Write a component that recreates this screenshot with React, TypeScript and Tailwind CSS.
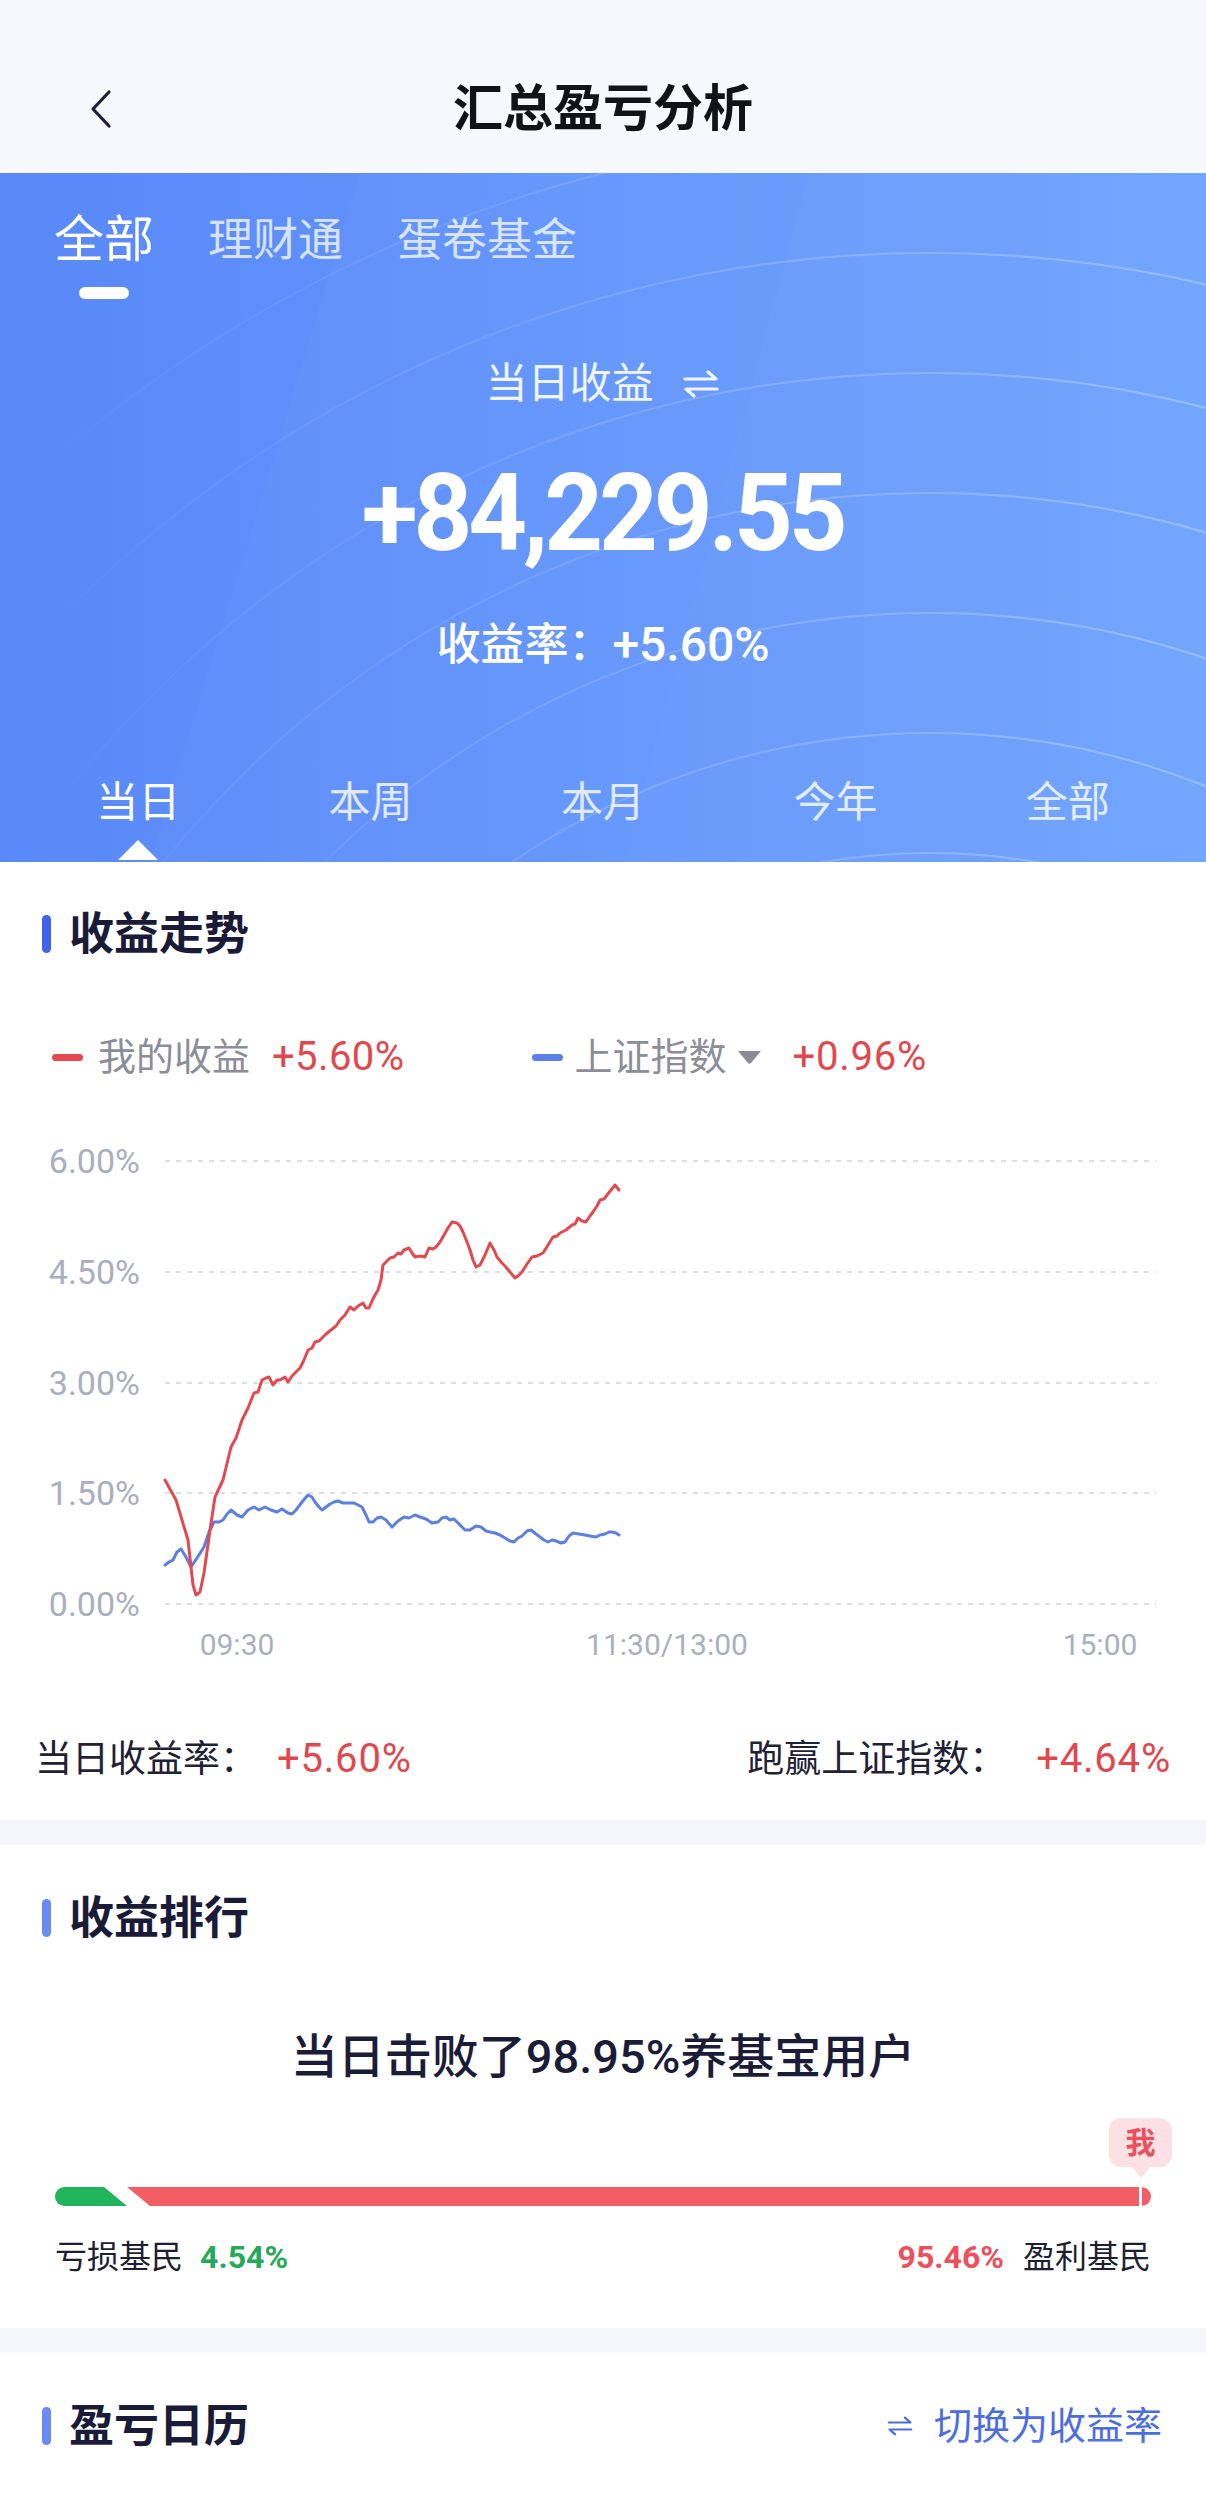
import React from "react";

const redPts: number[][] = [
  [165, 368], [176, 388], [188, 428], [193, 473], [196, 483], [200, 480], [204, 461], [210, 418], [215, 385], [223, 368],
  [231, 335], [236, 326], [242, 308], [248, 296], [254, 281], [258, 280], [262, 268], [266, 266], [269, 265], [273, 273], [277, 268],
  [280, 268], [285, 265], [288, 270], [292, 264], [296, 260], [300, 256], [304, 248], [308, 238], [312, 236], [315, 230], [319, 229], [322, 226],
  [326, 222], [331, 218], [336, 214], [340, 208], [345, 203], [350, 195], [354, 198], [358, 194], [363, 191], [366, 196], [369, 196],
  [372, 189], [375, 183], [378, 178], [381, 168], [383, 153], [386, 150], [390, 146], [394, 145], [398, 141], [401, 142], [404, 138], [409, 136],
  [412, 141], [415, 145], [420, 144], [425, 145], [429, 136], [433, 137], [436, 135], [440, 130], [444, 123], [448, 116], [452, 110], [457, 111],
  [460, 114], [463, 120], [467, 130], [470, 138], [473, 148], [476, 155], [480, 153], [485, 143], [490, 131], [494, 138], [497, 145],
  [501, 150], [505, 154], [510, 160], [515, 166], [518, 164], [522, 160], [527, 152], [532, 145], [537, 144], [543, 141], [548, 133],
  [553, 125], [557, 124], [560, 121], [566, 118], [572, 113], [575, 112], [578, 106], [582, 109], [586, 110], [590, 104], [593, 100],
  [597, 94], [600, 88], [604, 87], [607, 83], [611, 78], [615, 73], [619, 78],
];

const bluePts: number[][] = [
  [165, 453], [169, 450], [173, 448], [177, 440], [181, 437], [186, 445], [191, 455], [197, 446], [204, 435], [209, 420], [214, 410],
  [219, 410], [223, 408], [227, 402], [231, 398], [237, 403], [242, 405], [248, 398], [254, 395], [259, 398], [265, 395], [271, 398],
  [277, 400], [282, 397], [288, 401], [292, 402], [296, 398], [302, 390], [308, 383], [312, 385], [315, 390], [319, 395], [322, 398],
  [326, 395], [330, 392], [334, 390], [338, 389], [343, 391], [348, 391], [354, 391], [358, 393], [362, 395], [366, 403], [369, 410],
  [373, 410], [377, 406], [381, 405], [386, 408], [392, 415], [398, 409], [404, 405], [409, 406], [415, 403], [420, 405], [426, 407],
  [432, 411], [438, 410], [442, 406], [446, 405], [450, 408], [454, 407], [459, 412], [465, 418], [470, 418], [476, 414], [481, 415],
  [486, 419], [490, 420], [495, 421], [500, 423], [505, 426], [510, 429], [514, 430], [518, 426], [522, 424], [527, 419], [531, 418],
  [536, 422], [540, 425], [544, 428], [548, 430], [552, 428], [556, 429], [561, 431], [565, 430], [569, 424], [573, 421], [579, 422],
  [585, 423], [590, 424], [596, 425], [600, 423], [605, 422], [609, 420], [612, 420], [616, 421], [619, 423],
];

const toPath = (pts: number[][]) =>
  pts.map((p, i) => `${i ? "L" : "M"}${p[0]} ${p[1]}`).join(" ");

function SwapIcon({ color, w = 40, h = 30 }: { color: string; w?: number; h?: number }) {
  return (
    <svg width={w} height={h} viewBox="0 0 40 30" fill="none">
      <path d="M4 10 H35 L27 3" stroke={color} strokeWidth="3.2" strokeLinecap="round" strokeLinejoin="round" />
      <path d="M36 20 H5 L13 27" stroke={color} strokeWidth="3.2" strokeLinecap="round" strokeLinejoin="round" />
    </svg>
  );
}

function SectionTitle({ title, bar }: { title: string; bar: string }) {
  return (
    <div className="h-[60px] flex items-center pl-[42px]">
      <span className={`w-[9px] h-[38px] rounded-full ${bar}`} />
      <span className="ml-[18px] text-[45px] leading-none font-bold text-[#191b38]">{title}</span>
    </div>
  );
}

export default function App() {
  const grid = [49, 160, 271, 381, 492];
  const gridLabels = ["6.00%", "4.50%", "3.00%", "1.50%", "0.00%"];
  const periods = ["当日", "本周", "本月", "今年", "全部"];
  const radii = [620, 740, 860, 980, 1100, 1220, 1340];

  return (
    <div className="w-[1206px] h-[2495px] overflow-hidden bg-[#f5f6f9] font-['Roboto','Noto_Sans_CJK_SC',sans-serif]">
      {/* Nav bar */}
      <div className="h-[173px] bg-[#f6f8fb] flex items-center pt-[44px] px-[88px]">
        <svg width="26" height="40" viewBox="0 0 26 40" fill="none">
          <path d="M21 3 L5 20 L21 37" stroke="#1b1f3b" strokeWidth="3.2" strokeLinecap="round" strokeLinejoin="round" />
        </svg>
        <div className="flex-1 text-center text-[50px] leading-none font-bold text-[#111318]">汇总盈亏分析</div>
        <div className="w-[26px]" />
      </div>

      {/* Blue header */}
      <div className="relative h-[689px] overflow-hidden bg-gradient-to-r from-[#5988f8] via-[#6496fb] to-[#6ea3fd]">
        <svg className="absolute inset-0 pointer-events-none" width="1206" height="689">
          <defs>
            <linearGradient id="arcg" gradientUnits="userSpaceOnUse" x1="0" y1="0" x2="1206" y2="0">
              <stop offset="0" stopColor="#ffffff" stopOpacity="0" />
              <stop offset="0.35" stopColor="#ffffff" stopOpacity="0.08" />
              <stop offset="1" stopColor="#ffffff" stopOpacity="0.28" />
            </linearGradient>
          </defs>
          <polygon points="809,0 1206,0 1206,689 623,689" fill="#ffffff" fillOpacity="0.035" />
          <polygon points="360,0 809,0 623,689 150,689" fill="#ffffff" fillOpacity="0.02" />
          {radii.map((r) => (
            <circle key={r} cx="930" cy={1300} r={r} fill="none" stroke="url(#arcg)" strokeWidth="2" />
          ))}
        </svg>
        <div className="relative flex flex-col">
          <div className="mt-[30px] flex items-start gap-[54px] pl-[54px]">
            <div className="flex flex-col items-center">
              <span className="h-[74px] flex items-center text-[50px] leading-none text-white">全部</span>
              <span className="mt-[10px] h-[12px] w-[50px] rounded-full bg-white" />
            </div>
            <span className="h-[74px] flex items-center text-[45px] leading-none text-white/75">理财通</span>
            <span className="h-[74px] flex items-center text-[45px] leading-none text-white/75">蛋卷基金</span>
          </div>

          <div className="mt-[55px] h-[60px] flex items-center justify-center gap-[27px] text-[42px] leading-none text-white/90">
            <span>当日收益</span>
            <SwapIcon color="rgba(255,255,255,0.9)" />
          </div>

          <div className="mt-[45px] h-[108px] flex justify-center">
            <span className="inline-block text-[108px] leading-none font-bold text-white tracking-[-0.04em] scale-x-[0.95]">
              +84,229.55
            </span>
          </div>

          <div className="mt-[48px] h-[60px] flex items-center justify-center text-white font-medium leading-none">
            <span className="text-[44px]">收益率：</span>
            <span className="text-[48px]">+5.60%</span>
          </div>

          <div className="mt-[93px] grid grid-cols-5 px-[22px]">
            {periods.map((p, i) => (
              <div key={p} className="flex flex-col items-center">
                <span className={`h-[70px] flex items-center text-[42px] leading-none ${i === 0 ? "text-white" : "text-white/80"}`}>
                  {p}
                </span>
                {i === 0 && (
                  <span className="mt-[2px] w-0 h-0 border-l-[20px] border-r-[20px] border-b-[20px] border-l-transparent border-r-transparent border-b-white" />
                )}
              </div>
            ))}
          </div>
        </div>
      </div>

      {/* Card 1: 收益走势 */}
      <div className="bg-white pt-[42px] pb-[31px]">
        <SectionTitle title="收益走势" bar="bg-[#3f63e9]" />
        <div className="mt-[68px] h-[50px] flex items-center pl-[52px] text-[38px] leading-none">
          <span className="w-[31px] h-[7px] rounded-full bg-[#e5484f]" />
          <span className="ml-[15px] text-[#8b8e99]">我的收益</span>
          <span className="ml-[22px] text-[40px] tracking-[0.01em] text-[#e2474e]">+5.60%</span>
          <span className="ml-[128px] w-[31px] h-[7px] rounded-full bg-[#5b7fe6]" />
          <span className="ml-[11px] text-[#8b8e99]">上证指数</span>
          <svg className="ml-[10px]" width="27" height="16" viewBox="0 0 27 16">
            <path d="M2 2 H25 L15 14 Q13.5 15.5 12 14 Z" fill="#8a8b96" />
          </svg>
          <span className="ml-[29px] text-[40px] tracking-[0.02em] text-[#e2474e]">+0.96%</span>
        </div>

        <svg className="block mt-[30px]" width="1206" height="570">
          {grid.map((g, i) => (
            <g key={g}>
              <line x1="165" x2="1156" y1={g} y2={g} stroke="#dcdee4" strokeWidth="2" strokeDasharray="5 6" />
              <text x="140" y={g + 12} textAnchor="end" fontSize="34" fill="#a9afc0" fontFamily="Roboto, sans-serif">
                {gridLabels[i]}
              </text>
            </g>
          ))}
          <text x="237" y="543" textAnchor="middle" fontSize="30" fill="#a9afc0" fontFamily="Roboto, sans-serif">09:30</text>
          <text x="667" y="543" textAnchor="middle" fontSize="30" fill="#a9afc0" fontFamily="Roboto, sans-serif">11:30/13:00</text>
          <text x="1100" y="543" textAnchor="middle" fontSize="30" fill="#a9afc0" fontFamily="Roboto, sans-serif">15:00</text>
          <path d={toPath(bluePts)} fill="none" stroke="#5b7fe3" strokeWidth="3" strokeLinejoin="round" strokeLinecap="round" />
          <path d={toPath(redPts)} fill="none" stroke="#e3494f" strokeWidth="3" strokeLinejoin="round" strokeLinecap="round" />
        </svg>

        <div className="mt-[47px] h-[60px] flex items-center justify-between px-[35px] leading-none">
          <div className="flex items-center">
            <span className="text-[37px] text-[#1f2135]">当日收益率：</span>
            <span className="ml-[20px] text-[40px] tracking-[0.02em] text-[#e2474e]">+5.60%</span>
          </div>
          <div className="flex items-center">
            <span className="text-[37px] text-[#1f2135]">跑赢上证指数：</span>
            <span className="ml-[30px] text-[40px] tracking-[0.02em] text-[#e2474e]">+4.64%</span>
          </div>
        </div>
      </div>

      {/* Card 2: 收益排行 */}
      <div className="mt-[25px] bg-white pt-[43px] pb-[46px]">
        <SectionTitle title="收益排行" bar="bg-[#6a8af4]" />
        <div className="mt-[78px] h-[60px] flex items-center justify-center text-[47px] leading-none font-medium text-[#1b1d38]">
          当日击败了98.95%养基宝用户
        </div>
        <div className="mt-[32px] px-[55px]">
          <div className="flex justify-end mr-[-21px]">
            <div className="flex flex-col items-center">
              <div className="w-[63px] h-[49px] rounded-[12px] bg-[#fde0e3] flex items-center justify-center text-[30px] leading-none font-bold text-[#ea4f5b]">
                我
              </div>
              <div className="w-0 h-0 border-l-[9px] border-r-[9px] border-t-[11px] border-l-transparent border-r-transparent border-t-[#fde0e3]" />
            </div>
          </div>
          <div className="mt-[9px] relative h-[19px] rounded-full overflow-hidden flex">
            <div className="w-[72px] h-full bg-[#22b45a] [clip-path:polygon(0_0,49px_0,72px_100%,0_100%)]" />
            <div className="flex-1 h-full bg-[#f45c66] [clip-path:polygon(0_0,100%_0,100%_100%,23px_100%)]" />
            <div className="absolute right-[9px] top-0 h-full w-[3px] bg-white" />
          </div>
          <div className="mt-[26px] h-[50px] flex items-center justify-between text-[32px] leading-none">
            <div className="flex items-center">
              <span className="text-[#1d1f33]">亏损基民</span>
              <span className="ml-[17px] font-bold text-[#27a95a]">4.54%</span>
            </div>
            <div className="flex items-center">
              <span className="font-bold text-[#ee4f5a]">95.46%</span>
              <span className="ml-[19px] text-[#1d1f33]">盈利基民</span>
            </div>
          </div>
        </div>
      </div>

      {/* Card 3: 盈亏日历 */}
      <div className="relative mt-[25px] h-[142px] bg-white pt-[43px]">
        <div className="flex items-center justify-between pr-[44px]">
          <SectionTitle title="盈亏日历" bar="bg-[#6a8af4]" />
          <div className="flex items-center text-[38px] leading-none text-[#4a6de3]">
            <SwapIcon color="#4a6de3" w={28} h={22} />
            <span className="ml-[20px]">切换为收益率</span>
          </div>
        </div>
        <div className="absolute right-0 bottom-0 w-[300px] h-[58px] bg-gradient-to-b from-white/0 to-white/90" />
      </div>
    </div>
  );
}
